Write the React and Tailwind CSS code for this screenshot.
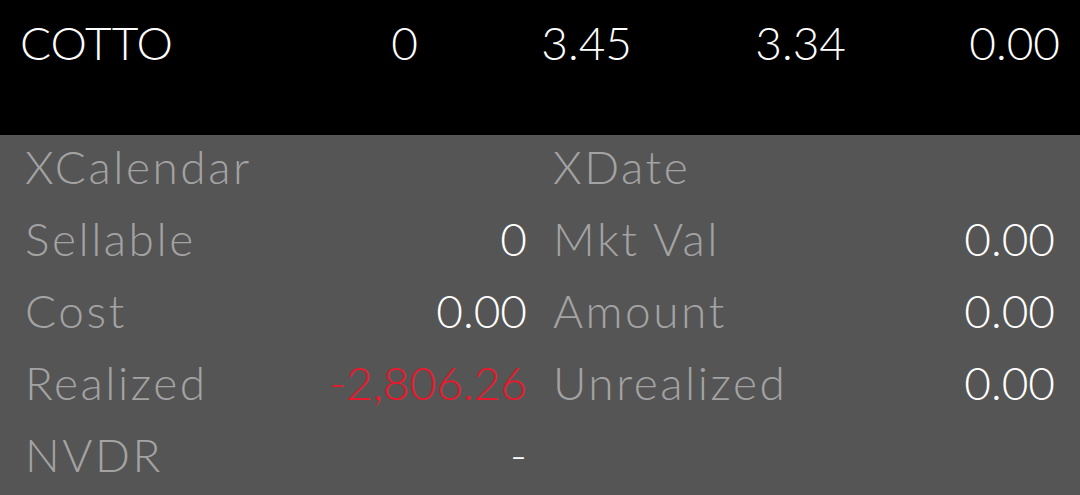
export default function App() {
  const rows = [
    [{ l: "XCalendar", v: "" }, { l: "XDate", v: "" }],
    [{ l: "Sellable", v: "0" }, { l: "Mkt Val", v: "0.00" }],
    [{ l: "Cost", v: "0.00" }, { l: "Amount", v: "0.00" }],
    [{ l: "Realized", v: "-2,806.26", red: true }, { l: "Unrealized", v: "0.00" }],
    [{ l: "NVDR", v: "-" }, null],
  ];
  return (
    <div className="w-[1080px] h-[495px] overflow-hidden flex flex-col" style={{ fontFamily: "Lato, 'Noto Sans', sans-serif" }}>
      <div className="h-[135px] bg-black text-white text-[46px] font-light grid grid-cols-[184px_214px_214px_214px_214px] pl-[20px] pt-[13px] leading-[60px]">
        <div>COTTO</div>
        <div className="text-right">0</div>
        <div className="text-right">3.45</div>
        <div className="text-right">3.34</div>
        <div className="text-right">0.00</div>
      </div>
      <div className="flex-1 bg-[#555555] px-[25px] text-[46px] font-light leading-[50px]">
        {rows.map((r, i) => (
          <div key={i} className="grid grid-cols-2 gap-x-[26px] h-[72px] items-center pb-[8px]">
            {r.map((c, j) =>
              c ? (
                <div key={j} className="flex justify-between items-center">
                  <span className="text-[#a3a3a3] tracking-[0.055em]">{c.l}</span>
                  <span className={c.red ? "text-[#e8192c]" : "text-white"}>{c.v}</span>
                </div>
              ) : (
                <div key={j} />
              )
            )}
          </div>
        ))}
      </div>
    </div>
  );
}
